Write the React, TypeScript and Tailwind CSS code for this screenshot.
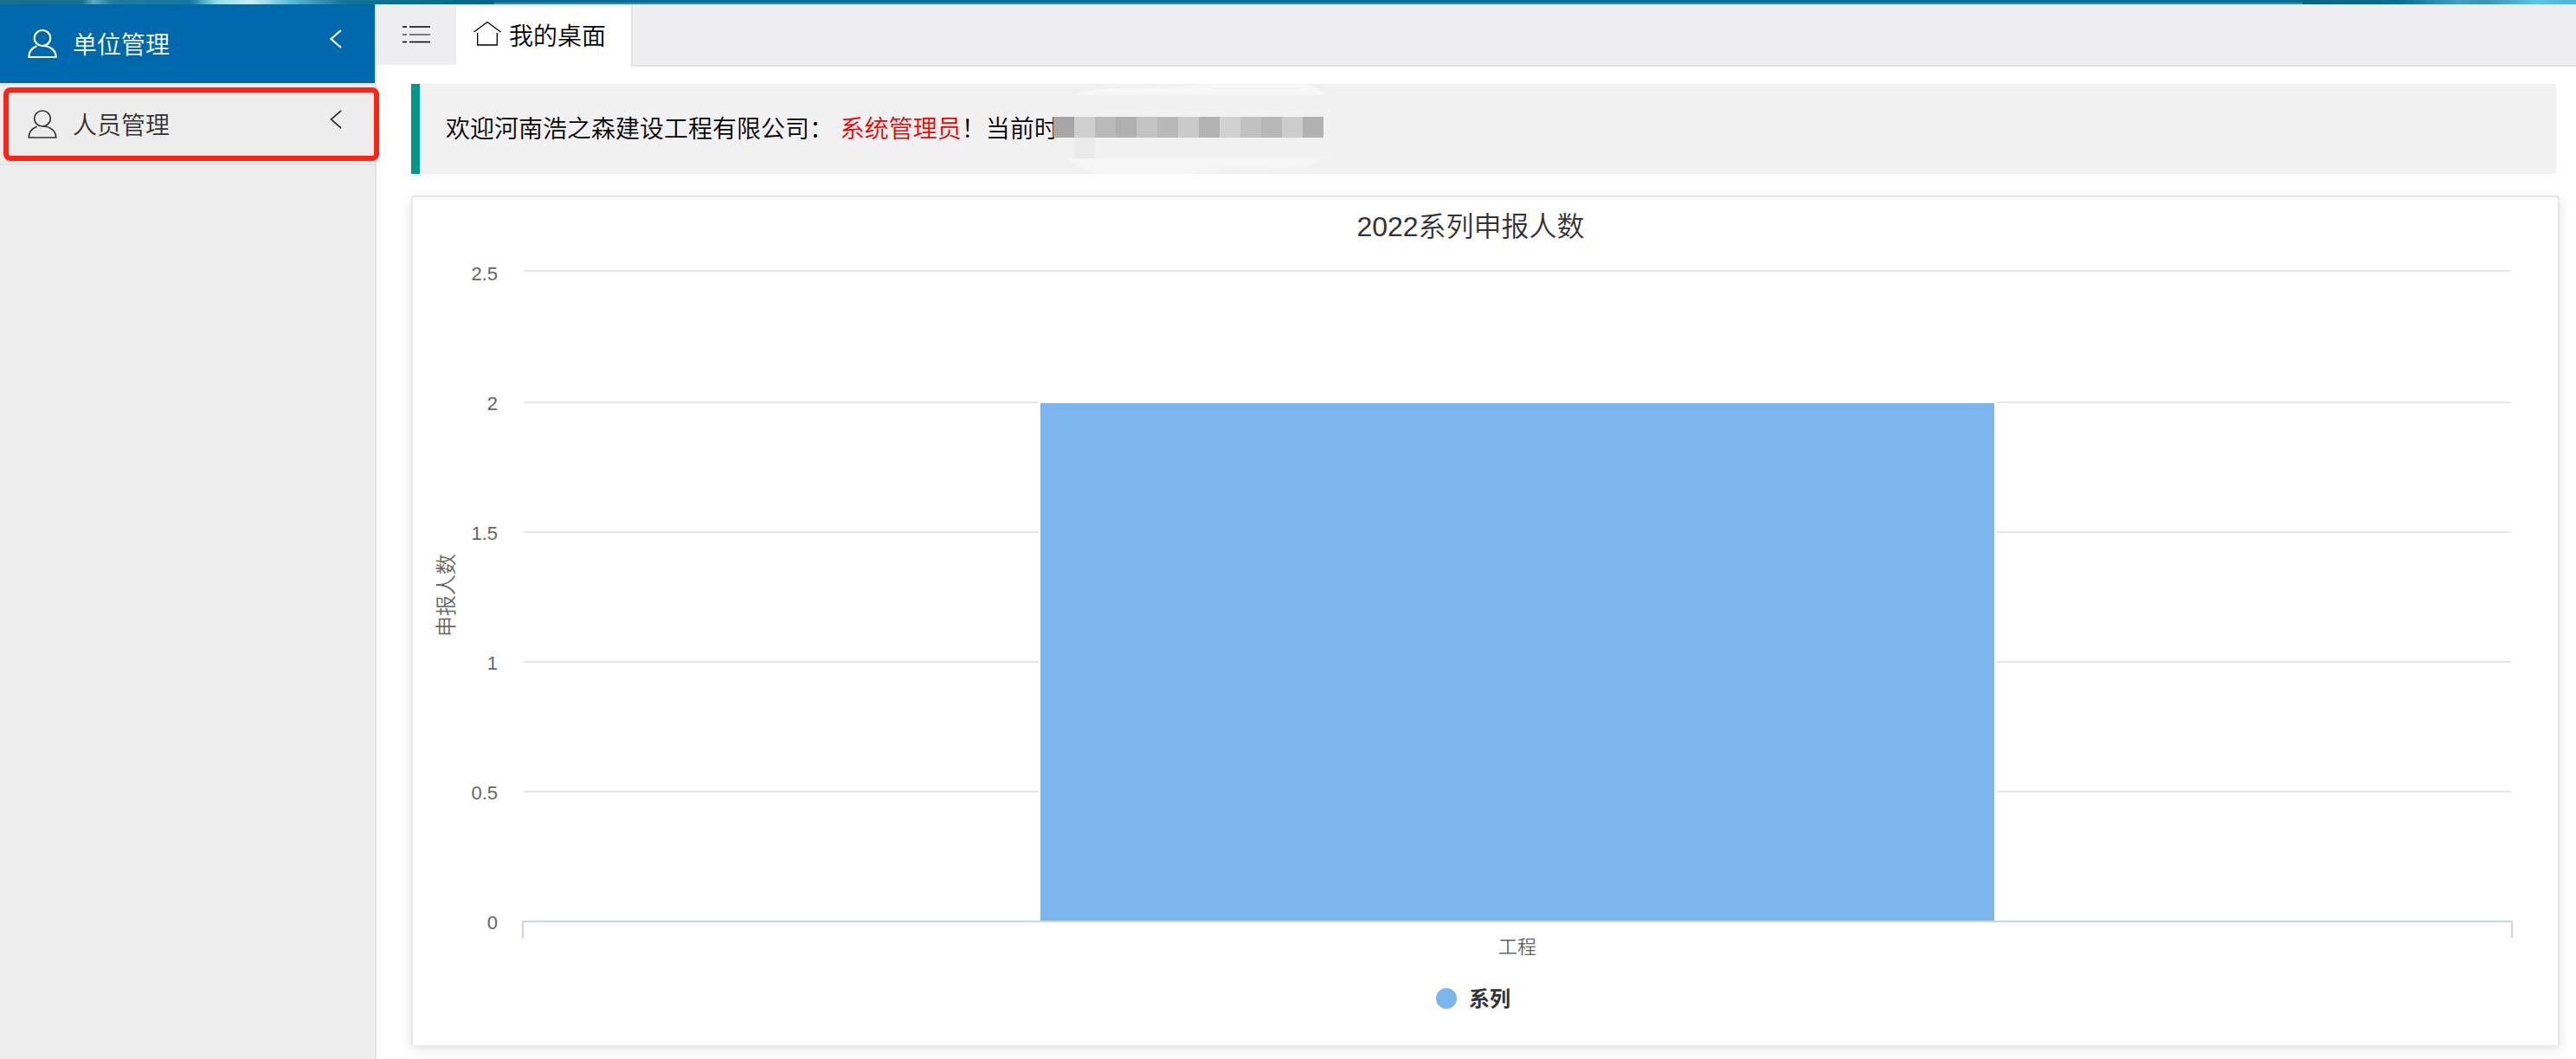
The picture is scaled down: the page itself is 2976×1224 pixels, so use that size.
import { clsx } from "clsx"

const menus = [
  { label: "单位管理", active: true },
  { label: "人员管理", active: false, marked: true },
]

const ticks = ["2.5", "2", "1.5", "1", "0.5", "0"]
const series = { name: "系列", category: "工程", value: 2 }
const pxPerUnit = 300

const mosaic = ["#a6a6a6", "#cfcfcf", "#b9b9b9", "#b0b0b0", "#c3c3c3", "#b8b8b8", "#cacaca", "#b3b3b3", "#d1d1d1", "#c1c1c1", "#b7b7b7", "#cccccc", "#b1b1b1"]

function UserIcon({ bold }: { bold?: boolean }) {
  return (
    <svg viewBox="0 0 34 34" className="w-[34px] h-[34px]" fill="none" stroke="currentColor" strokeWidth={bold ? 2.2 : 1.7}>
      <ellipse cx="17" cy="10" rx="9.3" ry="9" />
      <path d="M10.500 19.300C5 21.500 1.300 26 1.300 32H32.700C32.700 24.500 26 19 17.500 19" strokeLinejoin="round" />
    </svg>
  )
}

function ChevronLeft({ bold }: { bold?: boolean }) {
  return (
    <svg viewBox="0 0 14 22" className="w-[14px] h-[22px]" fill="none" stroke="currentColor" strokeWidth={bold ? 2.2 : 1.7}>
      <path d="M13 1L1.500 11L13 21" />
    </svg>
  )
}

function ListIcon() {
  return (
    <svg viewBox="0 0 32 22" className="w-8 h-[22px]" fill="none" stroke="currentColor" strokeWidth="1.5">
      <path d="M0 2H5M8 2H32M0 19.500H5M8 19.500H32" />
      <path d="M0 11H5M8 11H32" stroke="#555" />
    </svg>
  )
}

function HomeIcon() {
  return (
    <svg viewBox="0 0 32 30" className="w-8 h-[30px]" fill="none" stroke="currentColor" strokeWidth="1.3">
      <path d="M0.500 13L16 1.500L31.500 13M4.700 14V28H27.300V14" />
    </svg>
  )
}

function TopStrip() {
  return (
    <div className="flex h-[5px] w-full">
      <div className="w-[571px] bg-[linear-gradient(90deg,#1a708f_0px,#12708f_95px,#5fa9c4_108px,#1f7a9e_130px,#12789f_220px,#8fe0ef_250px,#c4f0f6_290px,#52b5d3_340px,#117497_400px,#08708c_500px,#08668c_571px)]" />
      <div className="flex-1 bg-[#046d9b] border-b-2 border-[#4c8198]" />
      <div className="w-[316px] bg-[linear-gradient(90deg,#0b6482_0px,#0a6e90_110px,#3f9fc4_180px,#3a93b5_210px,#5cc4e4_270px,#4fb4d6_316px)]" />
    </div>
  )
}

function Sidebar() {
  return (
    <nav className="w-[435px] shrink-0 bg-[#ededed] border-r-2 border-[#e2e2e4]">
      {menus.map((m) => (
        <div key={m.label} className="relative border-b-2 border-[#e4e4e4]">
          <button
            type="button"
            className={clsx(
              "flex items-center w-full h-[91px] pl-8 pr-[38px] text-[28px]",
              m.active ? "bg-[#0069ae] text-white" : "text-[#333]"
            )}
          >
            <UserIcon bold={m.active} />
            <span className="pl-[18px] pt-1">{m.label}</span>
            <span className="ml-auto pb-3">
              <ChevronLeft bold={m.active} />
            </span>
          </button>
          {m.marked && <div className="absolute left-1 -right-[5px] top-[3px] bottom-[3px] border-[6px] border-[#ff2314] rounded-lg pointer-events-none" />}
        </div>
      ))}
    </nav>
  )
}

function TabBar() {
  return (
    <div className="flex h-[72px] bg-[#eeeef0]">
      <button type="button" aria-label="菜单" className="w-[92px] flex items-start justify-center pt-6 border-b-2 border-white">
        <ListIcon />
      </button>
      <a href="#" className="flex items-start gap-[9px] mt-[2px] pt-[17px] pl-5 pr-[29px] bg-white text-black text-[28px] leading-[38px]">
        <HomeIcon />
        我的桌面
      </a>
      <div className="flex-1 border-l-2 border-b-2 border-[#e3e3e5]" />
    </div>
  )
}

function Mosaic() {
  return (
    <svg viewBox="0 0 320 104" className="w-[320px] h-[104px] -ml-[6px] shrink-0">
      <path d="M23 13Q36 6 80 5Q140 5 180 0H290Q306 4 316 13Z" fill="#f7f7f7" />
      <path d="M16 85H312Q300 98 260 98Q190 98 160 104H50Q26 98 16 85Z" fill="#f5f5f5" />
      <rect x="24" y="62" width="24" height="24" fill="#eaeaea" />
      {mosaic.map((c, i) => (
        <rect key={i} x={i * 24} y="38" width="24" height="24" fill={c} />
      ))}
    </svg>
  )
}

function Welcome() {
  return (
    <div className="flex items-center h-[104px] mr-1 pl-[30px] border-l-[10px] border-[#009688] bg-[#f1f1f1] rounded-r-sm text-[28px] text-black">
      <p className="pt-[2px] whitespace-nowrap">
        欢迎河南浩之森建设工程有限公司： <span className="text-[#f00000]">系统管理员</span>！当前时
      </p>
      <Mosaic />
    </div>
  )
}

function Chart() {
  return (
    <section className="mt-[25px] pr-[34px] pb-[42px] bg-white border-2 border-b-0 border-[#e6e6e6] rounded-t shadow-[0_4px_14px_rgba(0,0,0,0.13)]">
      <h2 className="h-[84px] pt-[6px] text-center text-[32px] leading-[56px] text-[#333]">2022系列申报人数</h2>
      <div className="flex pl-[21px] pr-[18px] text-[22px] leading-[22px] text-[#666]">
        <div className="w-9 h-[752px] flex items-center justify-center">
          <span className="[writing-mode:vertical-rl] [text-orientation:sideways] rotate-180 text-[24px]">申报人数</span>
        </div>
        <div className="w-[41px] h-[772px] -mt-[6px] mr-7 flex flex-col justify-between text-right">
          {ticks.map((t) => (
            <span key={t}>{t}</span>
          ))}
        </div>
        <div className="flex-1">
          <div className="grid">
            <div className="[grid-area:1/1] mx-[2px]">
              {ticks.slice(1).map((t) => (
                <div key={t} className="h-[150px] first:h-[152px] border-t-2 border-[#e6e6e6]" />
              ))}
            </div>
            <div
              className="[grid-area:1/1] self-end justify-self-center w-[48%] bg-[#7cb5ec] border border-t-2 border-b-0 border-white ring-1 ring-white"
              style={{ height: series.value * pxPerUnit }}
            />
          </div>
          <div className="relative h-5 border-2 border-b-0 border-[#ccd6e0]" />
          <div className="text-center">{series.category}</div>
        </div>
      </div>
      <button type="button" className="flex items-center gap-[14px] mx-auto mt-9 pl-[6px] h-6 text-[24px] leading-6 font-bold text-[#333]">
        <span className="size-6 rounded-full bg-[#7cb5ec]" />
        <span className="pt-[2px]">{series.name}</span>
      </button>
    </section>
  )
}

export default function App() {
  return (
    <div className="flex flex-col min-h-screen bg-white font-[350] font-['Liberation_Sans','Noto_Sans_CJK_SC',sans-serif]">
      <TopStrip />
      <div className="flex flex-1">
        <Sidebar />
        <main className="flex-1 min-w-0">
          <TabBar />
          <div className="pt-5 pl-10 pr-[19px] pb-4">
            <Welcome />
            <Chart />
          </div>
        </main>
      </div>
    </div>
  )
}
